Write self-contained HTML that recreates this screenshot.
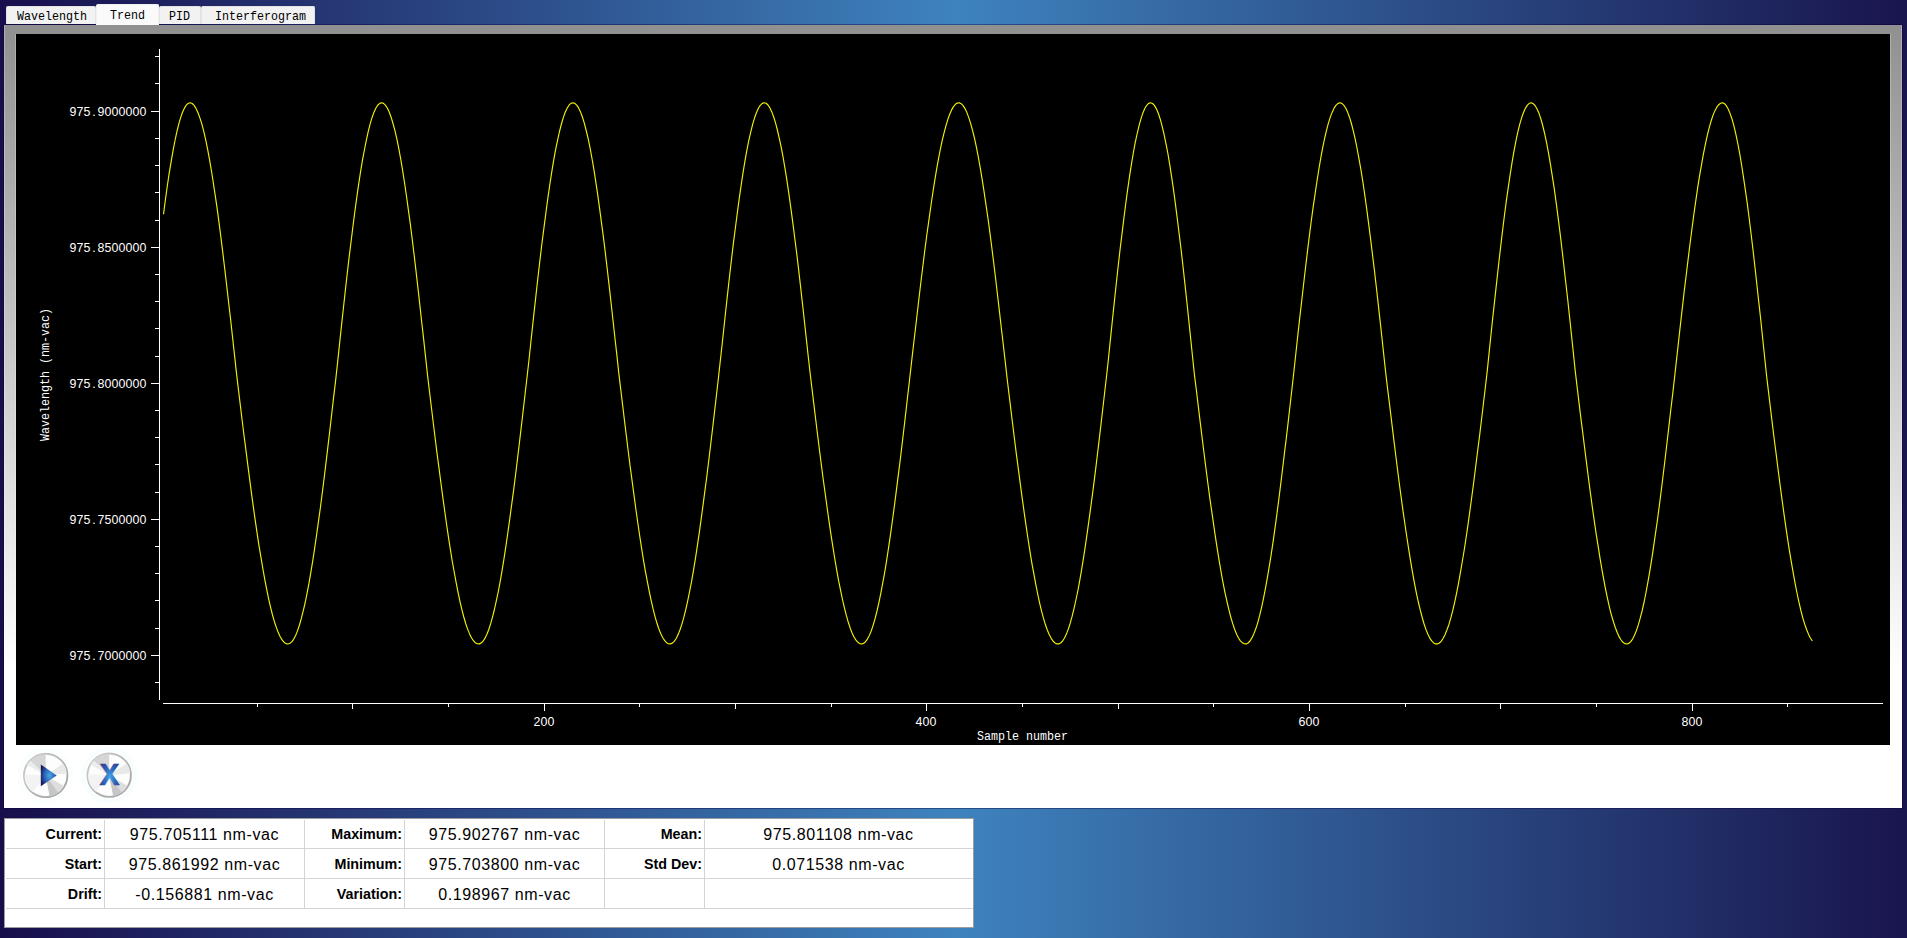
<!DOCTYPE html>
<html>
<head>
<meta charset="utf-8">
<title>Wavelength Trend</title>
<style>
html,body{margin:0;padding:0;}
body{width:1907px;height:938px;overflow:hidden;position:relative;
  background:linear-gradient(to right,#180e4c 0px,#3e83be 955px,#19154e 1907px);
  font-family:"Liberation Sans",sans-serif;}
.abs{position:absolute;box-sizing:border-box;}
/* tabs */
.tab{position:absolute;z-index:2;box-sizing:border-box;top:6px;height:18px;background:#f2f2f2;
  border:1px solid #e3e3e3;border-bottom:none;border-radius:2px 2px 0 0;
  font-family:"Liberation Mono",monospace;font-size:13.5px;line-height:18px;color:#000;white-space:nowrap;overflow:visible;}
.tab span{position:absolute;top:0px;left:0;display:block;transform-origin:0 0;transform:scaleX(0.864);}
.tab.sel{top:4px;height:21px;background:#fafafa;border-color:#f0f0f0;}
/* main panel */
#panel{left:4px;top:25px;width:1898px;height:783px;box-shadow:0 0 0 1px rgba(8,0,60,0.4);background:linear-gradient(to bottom,#909090 0px,#ffffff 645px);}
#plot{left:16px;top:34px;width:1874px;height:711px;background:#000;}
.hl{background:rgba(255,255,255,0.25);width:1px;top:25px;height:720px;}
svg text{font-family:"Liberation Mono",monospace;fill:#fff;}
svg text.dg{font-family:"Liberation Sans",sans-serif;font-size:12.4px;}
svg text.lt{font-family:"Liberation Mono",monospace;font-size:13.5px;}
/* table */
#tbl{left:4px;top:818px;width:970px;height:110px;background:#fff;border:1px solid #9a9c9e;}
.gl{position:absolute;background:#d4d4d4;}
.lbl{position:absolute;font-weight:bold;font-size:14.3px;line-height:16px;text-align:right;color:#000;white-space:nowrap;}
.val{position:absolute;font-size:16px;letter-spacing:0.6px;line-height:20px;text-align:center;color:#000;white-space:nowrap;}
</style>
</head>
<body>

<!-- tabs -->
<div class="tab" style="left:6px;width:90px;"><span style="left:9.6px;top:1px;">Wavelength</span></div>
<div class="tab sel" style="left:96px;width:63px;"><span style="left:13.4px;top:2px;">Trend</span></div>
<div class="tab" style="left:159px;width:42px;"><span style="left:8.6px;top:1px;">PID</span></div>
<div class="tab" style="left:201px;width:114px;"><span style="left:12.7px;top:1px;">Interferogram</span></div>

<!-- main panel -->
<div id="panel" class="abs"></div>
<div class="abs hl" style="left:4px;"></div>
<div class="abs hl" style="left:15px;top:34px;height:711px;"></div>
<div class="abs hl" style="left:1890px;top:34px;height:711px;"></div>
<div class="abs hl" style="left:1901px;"></div>

<div id="plot" class="abs">
<svg width="1874" height="711" viewBox="0 0 1874 711">
<g stroke="#fff" stroke-width="1" shape-rendering="crispEdges">
<line x1="143.5" y1="15" x2="143.5" y2="666"/>
<line x1="139" y1="22.5" x2="144" y2="22.5"/>
<line x1="139" y1="49.5" x2="144" y2="49.5"/>
<line x1="135" y1="77.5" x2="144" y2="77.5"/>
<line x1="139" y1="104.5" x2="144" y2="104.5"/>
<line x1="139" y1="131.5" x2="144" y2="131.5"/>
<line x1="139" y1="158.5" x2="144" y2="158.5"/>
<line x1="139" y1="186.5" x2="144" y2="186.5"/>
<line x1="135" y1="213.5" x2="144" y2="213.5"/>
<line x1="139" y1="240.5" x2="144" y2="240.5"/>
<line x1="139" y1="267.5" x2="144" y2="267.5"/>
<line x1="139" y1="294.5" x2="144" y2="294.5"/>
<line x1="139" y1="322.5" x2="144" y2="322.5"/>
<line x1="135" y1="349.5" x2="144" y2="349.5"/>
<line x1="139" y1="376.5" x2="144" y2="376.5"/>
<line x1="139" y1="403.5" x2="144" y2="403.5"/>
<line x1="139" y1="430.5" x2="144" y2="430.5"/>
<line x1="139" y1="458.5" x2="144" y2="458.5"/>
<line x1="135" y1="485.5" x2="144" y2="485.5"/>
<line x1="139" y1="512.5" x2="144" y2="512.5"/>
<line x1="139" y1="539.5" x2="144" y2="539.5"/>
<line x1="139" y1="566.5" x2="144" y2="566.5"/>
<line x1="139" y1="594.5" x2="144" y2="594.5"/>
<line x1="135" y1="621.5" x2="144" y2="621.5"/>
<line x1="139" y1="648.5" x2="144" y2="648.5"/>
<line x1="147" y1="669.5" x2="1867" y2="669.5"/>
<line x1="241.5" y1="669" x2="241.5" y2="673"/>
<line x1="336.5" y1="669" x2="336.5" y2="675"/>
<line x1="432.5" y1="669" x2="432.5" y2="673"/>
<line x1="528.5" y1="669" x2="528.5" y2="677"/>
<line x1="623.5" y1="669" x2="623.5" y2="673"/>
<line x1="719.5" y1="669" x2="719.5" y2="675"/>
<line x1="815.5" y1="669" x2="815.5" y2="673"/>
<line x1="910.5" y1="669" x2="910.5" y2="677"/>
<line x1="1006.5" y1="669" x2="1006.5" y2="673"/>
<line x1="1102.5" y1="669" x2="1102.5" y2="675"/>
<line x1="1197.5" y1="669" x2="1197.5" y2="673"/>
<line x1="1293.5" y1="669" x2="1293.5" y2="677"/>
<line x1="1389.5" y1="669" x2="1389.5" y2="673"/>
<line x1="1484.5" y1="669" x2="1484.5" y2="675"/>
<line x1="1580.5" y1="669" x2="1580.5" y2="673"/>
<line x1="1676.5" y1="669" x2="1676.5" y2="677"/>
<line x1="1771.5" y1="669" x2="1771.5" y2="673"/>
</g>
<polyline fill="none" stroke="#f2f200" stroke-width="1.15" stroke-linejoin="round" points="147.5,180.2 149.4,165.7 151.3,152.0 153.2,139.2 155.2,127.3 157.1,116.4 159.0,106.5 160.9,97.6 162.8,89.9 164.7,83.4 166.6,78.0 168.5,73.9 170.5,70.9 172.4,69.3 174.3,68.8 176.2,69.5 178.1,71.4 180.0,74.4 181.9,78.5 183.8,83.6 185.8,89.9 187.7,97.1 189.6,105.4 191.5,114.7 193.4,124.9 195.3,136.0 197.2,148.0 199.1,160.7 201.1,174.2 203.0,188.4 204.9,203.2 206.8,218.6 208.7,234.5 210.6,250.8 212.5,267.5 214.5,284.5 216.4,301.7 218.3,319.1 220.2,336.6 222.1,352.7 224.0,368.5 225.9,384.2 227.8,399.7 229.8,415.1 231.7,430.1 233.6,444.9 235.5,459.3 237.4,473.3 239.3,486.8 241.2,499.9 243.1,512.3 245.1,524.2 247.0,535.5 248.9,546.1 250.8,555.9 252.7,565.1 254.6,573.4 256.5,581.0 258.4,587.7 260.4,593.6 262.3,598.6 264.2,602.7 266.1,605.9 268.0,608.2 269.9,609.6 271.8,610.0 273.7,609.5 275.7,607.9 277.6,605.3 279.5,601.7 281.4,597.1 283.3,591.5 285.2,584.9 287.1,577.4 289.1,569.0 291.0,559.7 292.9,549.6 294.8,538.7 296.7,527.0 298.6,514.6 300.5,501.5 302.4,487.8 304.4,473.5 306.3,458.7 308.2,443.5 310.1,427.9 312.0,411.9 313.9,395.7 315.8,379.2 317.7,362.6 319.7,345.9 321.6,328.4 323.5,310.4 325.4,292.6 327.3,275.0 329.2,257.7 331.1,240.8 333.0,224.2 335.0,208.2 336.9,192.8 338.8,178.0 340.7,163.9 342.6,150.6 344.5,138.2 346.4,126.6 348.4,116.0 350.3,106.3 352.2,97.7 354.1,90.2 356.0,83.7 357.9,78.4 359.8,74.2 361.7,71.2 363.7,69.4 365.6,68.8 367.5,69.4 369.4,71.1 371.3,74.0 373.2,78.0 375.1,83.2 377.0,89.5 379.0,96.8 380.9,105.2 382.8,114.6 384.7,125.0 386.6,136.3 388.5,148.5 390.4,161.5 392.3,175.3 394.3,189.8 396.2,205.0 398.1,220.7 400.0,236.9 401.9,253.6 403.8,270.6 405.7,288.0 407.7,305.6 409.6,323.3 411.5,340.9 413.4,356.7 415.3,372.5 417.2,388.2 419.1,403.8 421.0,419.1 423.0,434.1 424.9,448.8 426.8,463.1 428.7,477.0 430.6,490.5 432.5,503.4 434.4,515.7 436.3,527.5 438.3,538.5 440.2,548.9 442.1,558.6 444.0,567.6 445.9,575.7 447.8,583.0 449.7,589.5 451.6,595.1 453.6,599.9 455.5,603.7 457.4,606.7 459.3,608.7 461.2,609.8 463.1,609.9 465.0,609.1 467.0,607.3 468.9,604.4 470.8,600.5 472.7,595.7 474.6,589.9 476.5,583.1 478.4,575.5 480.3,566.9 482.3,557.5 484.2,547.3 486.1,536.3 488.0,524.6 489.9,512.1 491.8,499.0 493.7,485.3 495.6,471.1 497.6,456.4 499.5,441.2 501.4,425.6 503.3,409.8 505.2,393.6 507.1,377.3 509.0,360.8 510.9,344.2 512.9,326.7 514.8,308.8 516.7,291.1 518.6,273.6 520.5,256.4 522.4,239.5 524.3,223.1 526.2,207.2 528.2,191.9 530.1,177.2 532.0,163.2 533.9,150.0 535.8,137.7 537.7,126.2 539.6,115.6 541.6,106.1 543.5,97.5 545.4,90.0 547.3,83.6 549.2,78.3 551.1,74.2 553.0,71.2 554.9,69.4 556.9,68.8 558.8,69.4 560.7,71.1 562.6,73.9 564.5,77.9 566.4,83.0 568.3,89.2 570.2,96.5 572.2,104.9 574.1,114.2 576.0,124.5 577.9,135.7 579.8,147.8 581.7,160.7 583.6,174.4 585.5,188.8 587.5,203.8 589.4,219.4 591.3,235.5 593.2,252.1 595.1,269.0 597.0,286.3 598.9,303.7 600.9,321.4 602.8,339.1 604.7,355.0 606.6,370.9 608.5,386.7 610.4,402.3 612.3,417.7 614.2,432.8 616.2,447.6 618.1,462.0 620.0,476.0 621.9,489.5 623.8,502.5 625.7,514.9 627.6,526.8 629.5,537.9 631.5,548.4 633.4,558.2 635.3,567.2 637.2,575.4 639.1,582.8 641.0,589.3 642.9,595.0 644.8,599.8 646.8,603.7 648.7,606.6 650.6,608.7 652.5,609.8 654.4,609.9 656.3,609.1 658.2,607.3 660.2,604.5 662.1,600.6 664.0,595.8 665.9,590.1 667.8,583.4 669.7,575.8 671.6,567.3 673.5,558.0 675.5,547.9 677.4,536.9 679.3,525.3 681.2,512.9 683.1,499.9 685.0,486.4 686.9,472.2 688.8,457.6 690.8,442.5 692.7,427.0 694.6,411.2 696.5,395.2 698.4,378.9 700.3,362.5 702.2,346.0 704.1,328.6 706.1,310.7 708.0,292.9 709.9,275.3 711.8,257.9 713.7,241.0 715.6,224.5 717.5,208.4 719.5,193.0 721.4,178.2 723.3,164.1 725.2,150.8 727.1,138.3 729.0,126.7 730.9,116.1 732.8,106.4 734.8,97.8 736.7,90.2 738.6,83.8 740.5,78.5 742.4,74.3 744.3,71.3 746.2,69.4 748.1,68.8 750.1,69.3 752.0,71.0 753.9,73.9 755.8,77.9 757.7,83.0 759.6,89.2 761.5,96.5 763.4,104.8 765.4,114.1 767.3,124.4 769.2,135.6 771.1,147.7 773.0,160.6 774.9,174.3 776.8,188.7 778.7,203.7 780.7,219.3 782.6,235.4 784.5,252.0 786.4,268.9 788.3,286.2 790.2,303.6 792.1,321.3 794.1,339.0 796.0,354.8 797.9,370.6 799.8,386.2 801.7,401.7 803.6,417.0 805.5,432.0 807.4,446.7 809.4,461.0 811.3,475.0 813.2,488.4 815.1,501.3 817.0,513.7 818.9,525.5 820.8,536.7 822.7,547.2 824.7,556.9 826.6,566.0 828.5,574.2 830.4,581.7 832.3,588.3 834.2,594.1 836.1,599.0 838.0,603.0 840.0,606.1 841.9,608.3 843.8,609.6 845.7,610.0 847.6,609.4 849.5,607.7 851.4,605.1 853.4,601.4 855.3,596.7 857.2,591.1 859.1,584.5 861.0,577.0 862.9,568.6 864.8,559.3 866.7,549.2 868.7,538.3 870.6,526.6 872.5,514.2 874.4,501.2 876.3,487.5 878.2,473.3 880.1,458.6 882.0,443.4 884.0,427.8 885.9,411.9 887.8,395.7 889.7,379.4 891.6,362.8 893.5,346.2 895.4,329.4 897.3,312.7 899.3,296.0 901.2,279.5 903.1,263.3 905.0,247.3 906.9,231.7 908.8,216.5 910.7,201.8 912.7,187.6 914.6,174.0 916.5,161.0 918.4,148.7 920.3,137.2 922.2,126.4 924.1,116.5 926.0,107.4 928.0,99.2 929.9,91.9 931.8,85.6 933.7,80.3 935.6,75.9 937.5,72.6 939.4,70.3 941.3,69.1 943.3,68.8 945.2,69.7 947.1,71.6 949.0,74.6 950.9,78.6 952.8,83.6 954.7,89.7 956.6,96.7 958.6,104.7 960.5,113.7 962.4,123.5 964.3,134.1 966.2,145.6 968.1,157.9 970.0,170.8 972.0,184.5 973.9,198.7 975.8,213.5 977.7,228.8 979.6,244.5 981.5,260.7 983.4,277.1 985.3,293.7 987.3,310.6 989.2,327.5 991.1,344.2 993.0,360.0 994.9,375.7 996.8,391.3 998.7,406.7 1000.6,421.9 1002.6,436.9 1004.5,451.4 1006.4,465.6 1008.3,479.4 1010.2,492.7 1012.1,505.5 1014.0,517.7 1015.9,529.3 1017.9,540.2 1019.8,550.4 1021.7,560.0 1023.6,568.8 1025.5,576.8 1027.4,583.9 1029.3,590.3 1031.2,595.8 1033.2,600.4 1035.1,604.1 1037.0,607.0 1038.9,608.9 1040.8,609.9 1042.7,609.9 1044.6,609.0 1046.6,607.0 1048.5,604.0 1050.4,600.1 1052.3,595.1 1054.2,589.2 1056.1,582.4 1058.0,574.6 1059.9,566.0 1061.9,556.5 1063.8,546.2 1065.7,535.1 1067.6,523.3 1069.5,510.8 1071.4,497.6 1073.3,483.9 1075.2,469.6 1077.2,454.8 1079.1,439.6 1081.0,424.0 1082.9,408.1 1084.8,391.9 1086.7,375.5 1088.6,359.0 1090.5,342.5 1092.5,324.2 1094.4,305.6 1096.3,287.2 1098.2,269.1 1100.1,251.2 1102.0,233.8 1103.9,216.9 1105.9,200.6 1107.8,184.9 1109.7,170.0 1111.6,155.9 1113.5,142.6 1115.4,130.3 1117.3,119.0 1119.2,108.7 1121.2,99.5 1123.1,91.4 1125.0,84.6 1126.9,78.9 1128.8,74.5 1130.7,71.3 1132.6,69.4 1134.5,68.8 1136.5,69.5 1138.4,71.4 1140.3,74.6 1142.2,79.0 1144.1,84.7 1146.0,91.6 1147.9,99.6 1149.8,108.8 1151.8,119.0 1153.7,130.3 1155.6,142.6 1157.5,155.7 1159.4,169.8 1161.3,184.7 1163.2,200.2 1165.2,216.5 1167.1,233.3 1169.0,250.6 1170.9,268.3 1172.8,286.4 1174.7,304.7 1176.6,323.2 1178.5,341.4 1180.5,357.3 1182.4,373.1 1184.3,388.9 1186.2,404.4 1188.1,419.7 1190.0,434.8 1191.9,449.5 1193.8,463.8 1195.8,477.7 1197.7,491.2 1199.6,504.1 1201.5,516.4 1203.4,528.1 1205.3,539.2 1207.2,549.6 1209.1,559.2 1211.1,568.1 1213.0,576.2 1214.9,583.5 1216.8,589.9 1218.7,595.5 1220.6,600.2 1222.5,604.0 1224.4,606.9 1226.4,608.8 1228.3,609.8 1230.2,609.9 1232.1,609.0 1234.0,607.0 1235.9,603.9 1237.8,599.9 1239.8,594.8 1241.7,588.8 1243.6,581.7 1245.5,573.8 1247.4,564.9 1249.3,555.2 1251.2,544.6 1253.1,533.3 1255.1,521.1 1257.0,508.3 1258.9,494.9 1260.8,480.8 1262.7,466.2 1264.6,451.1 1266.5,435.5 1268.4,419.6 1270.4,403.4 1272.3,386.9 1274.2,370.3 1276.1,353.5 1278.0,336.5 1279.9,319.0 1281.8,301.5 1283.7,284.1 1285.7,267.0 1287.6,250.2 1289.5,233.8 1291.4,217.9 1293.3,202.4 1295.2,187.5 1297.1,173.3 1299.1,159.8 1301.0,147.0 1302.9,135.0 1304.8,123.9 1306.7,113.7 1308.6,104.5 1310.5,96.3 1312.4,89.1 1314.4,82.9 1316.3,77.9 1318.2,73.9 1320.1,71.1 1322.0,69.4 1323.9,68.8 1325.8,69.4 1327.7,71.1 1329.7,74.0 1331.6,78.1 1333.5,83.2 1335.4,89.5 1337.3,96.8 1339.2,105.2 1341.1,114.5 1343.0,124.8 1345.0,136.1 1346.9,148.2 1348.8,161.2 1350.7,174.9 1352.6,189.3 1354.5,204.3 1356.4,219.9 1358.4,236.1 1360.3,252.7 1362.2,269.6 1364.1,286.9 1366.0,304.3 1367.9,322.0 1369.8,339.6 1371.7,355.6 1373.7,371.6 1375.6,387.4 1377.5,403.1 1379.4,418.5 1381.3,433.7 1383.2,448.5 1385.1,462.9 1387.0,476.9 1389.0,490.5 1390.9,503.5 1392.8,515.9 1394.7,527.7 1396.6,538.9 1398.5,549.4 1400.4,559.1 1402.3,568.0 1404.3,576.2 1406.2,583.5 1408.1,590.0 1410.0,595.6 1411.9,600.3 1413.8,604.1 1415.7,606.9 1417.7,608.9 1419.6,609.9 1421.5,609.9 1423.4,609.0 1425.3,607.1 1427.2,604.3 1429.1,600.5 1431.0,595.8 1433.0,590.2 1434.9,583.7 1436.8,576.3 1438.7,568.1 1440.6,559.1 1442.5,549.3 1444.4,538.7 1446.3,527.5 1448.3,515.5 1450.2,503.0 1452.1,489.9 1454.0,476.2 1455.9,462.0 1457.8,447.5 1459.7,432.5 1461.6,417.2 1463.6,401.6 1465.5,385.8 1467.4,369.8 1469.3,353.7 1471.2,337.4 1473.1,318.9 1475.0,300.5 1476.9,282.4 1478.9,264.4 1480.8,246.9 1482.7,229.7 1484.6,213.1 1486.5,197.1 1488.4,181.7 1490.3,167.1 1492.3,153.2 1494.2,140.3 1496.1,128.2 1498.0,117.2 1499.9,107.2 1501.8,98.2 1503.7,90.4 1505.6,83.8 1507.6,78.3 1509.5,74.1 1511.4,71.1 1513.3,69.3 1515.2,68.8 1517.1,69.6 1519.0,71.5 1520.9,74.7 1522.9,79.1 1524.8,84.7 1526.7,91.5 1528.6,99.4 1530.5,108.4 1532.4,118.4 1534.3,129.4 1536.2,141.4 1538.2,154.3 1540.1,168.1 1542.0,182.6 1543.9,197.8 1545.8,213.7 1547.7,230.1 1549.6,247.1 1551.6,264.5 1553.5,282.2 1555.4,300.2 1557.3,318.3 1559.2,336.6 1561.1,352.8 1563.0,368.6 1564.9,384.4 1566.9,399.9 1568.8,415.3 1570.7,430.4 1572.6,445.2 1574.5,459.6 1576.4,473.6 1578.3,487.2 1580.2,500.2 1582.2,512.7 1584.1,524.6 1586.0,535.9 1587.9,546.4 1589.8,556.3 1591.7,565.4 1593.6,573.8 1595.5,581.3 1597.5,588.0 1599.4,593.8 1601.3,598.8 1603.2,602.9 1605.1,606.0 1607.0,608.3 1608.9,609.6 1610.9,610.0 1612.8,609.4 1614.7,607.7 1616.6,605.1 1618.5,601.3 1620.4,596.6 1622.3,590.9 1624.2,584.2 1626.2,576.5 1628.1,568.0 1630.0,558.5 1631.9,548.2 1633.8,537.1 1635.7,525.3 1637.6,512.7 1639.5,499.4 1641.5,485.5 1643.4,471.1 1645.3,456.2 1647.2,440.8 1649.1,425.0 1651.0,408.8 1652.9,392.4 1654.8,375.8 1656.8,359.1 1658.7,342.3 1660.6,325.1 1662.5,308.0 1664.4,290.9 1666.3,274.1 1668.2,257.5 1670.2,241.3 1672.1,225.4 1674.0,210.0 1675.9,195.2 1677.8,180.9 1679.7,167.3 1681.6,154.3 1683.5,142.2 1685.5,130.8 1687.4,120.2 1689.3,110.6 1691.2,101.9 1693.1,94.1 1695.0,87.3 1696.9,81.6 1698.8,76.9 1700.8,73.2 1702.7,70.7 1704.6,69.2 1706.5,68.8 1708.4,69.6 1710.3,71.7 1712.2,75.0 1714.1,79.6 1716.1,85.3 1718.0,92.2 1719.9,100.3 1721.8,109.5 1723.7,119.7 1725.6,131.0 1727.5,143.3 1729.4,156.4 1731.4,170.4 1733.3,185.2 1735.2,200.7 1737.1,216.8 1739.0,233.5 1740.9,250.7 1742.8,268.3 1744.8,286.3 1746.7,304.5 1748.6,322.8 1750.5,341.0 1752.4,356.9 1754.3,372.8 1756.2,388.6 1758.1,404.2 1760.1,419.6 1762.0,434.7 1763.9,449.5 1765.8,463.8 1767.7,477.8 1769.6,491.3 1771.5,504.2 1773.4,516.6 1775.4,528.3 1777.3,539.4 1779.2,549.8 1781.1,559.5 1783.0,568.4 1784.9,576.5 1786.8,583.8 1788.7,590.2 1790.7,595.7 1792.6,600.4 1794.5,604.2 1796.4,607.0"/>
<text class="dg" x="53.5 60.5 67.5 76.2 81.5 88.5 95.5 102.5 109.5 116.5 123.5" y="82">975.9000000</text>
<text class="dg" x="53.5 60.5 67.5 76.2 81.5 88.5 95.5 102.5 109.5 116.5 123.5" y="218">975.8500000</text>
<text class="dg" x="53.5 60.5 67.5 76.2 81.5 88.5 95.5 102.5 109.5 116.5 123.5" y="354">975.8000000</text>
<text class="dg" x="53.5 60.5 67.5 76.2 81.5 88.5 95.5 102.5 109.5 116.5 123.5" y="490">975.7500000</text>
<text class="dg" x="53.5 60.5 67.5 76.2 81.5 88.5 95.5 102.5 109.5 116.5 123.5" y="626">975.7000000</text>
<text class="dg" x="517.5 524.5 531.5" y="692">200</text>
<text class="dg" x="899.5 906.5 913.5" y="692">400</text>
<text class="dg" x="1282.5 1289.5 1296.5" y="692">600</text>
<text class="dg" x="1665.5 1672.5 1679.5" y="692">800</text>
<g transform="translate(1006.5,706) scale(0.864,1)"><text class="lt" x="0" y="0" text-anchor="middle">Sample number</text></g>
<g transform="translate(33.4,340.5) rotate(-90) scale(0.864,1)"><text class="lt" x="0" y="0" text-anchor="middle">Wavelength (nm-vac)</text></g>
</svg>
</div>

<!-- buttons -->
<svg class="abs" style="left:16px;top:745px;" width="140" height="62" viewBox="0 0 140 62">
<defs>
<radialGradient id="gb" cx="0.55" cy="0.5" r="0.6"><stop offset="0" stop-color="#45a8e6"/><stop offset="0.55" stop-color="#2e62b8"/><stop offset="1" stop-color="#181a55"/></radialGradient>
<radialGradient id="gx" cx="0.5" cy="0.5" r="0.55"><stop offset="0" stop-color="#3fa6e6"/><stop offset="0.6" stop-color="#2f5cb4"/><stop offset="1" stop-color="#2a3d8f"/></radialGradient>
<linearGradient id="ring" x1="0" y1="0" x2="1" y2="1"><stop offset="0" stop-color="#d0d0d0"/><stop offset="1" stop-color="#9e9e9e"/></linearGradient>
<g id="disc">
<circle cx="0" cy="0" r="21.7" fill="#fdfdfd" stroke="url(#ring)" stroke-width="1.9"/>
<path d="M0,0 L-15.5,-14.5 A21.2,21.2 0 0 1 0,-21.2 Z" fill="#d6d6d6"/>
<path d="M0,0 L-18.5,-10.4 A21.2,21.2 0 0 1 -15.5,-14.5 Z" fill="#ececec"/>
<path d="M0,0 L17.5,-12 A21.2,21.2 0 0 1 21.2,-2 Z" fill="#e9e9e9"/>
<path d="M0,0 L18.4,10.6 A21.2,21.2 0 0 1 4,20.8 Z" fill="#dedede"/>
<path d="M0,0 L12.5,17.1 A21.2,21.2 0 0 1 4,20.8 Z" fill="#c6c6c6"/>
<path d="M0,0 L-21.2,-1 A21.2,21.2 0 0 0 -13,16.7 Z" fill="#f3f3f3"/>
</g>
</defs>
<circle cx="29.7" cy="30.4" r="26" fill="none" stroke="#c8f4ff" stroke-opacity="0.08" stroke-width="4"/>
<circle cx="93.2" cy="30.2" r="26" fill="none" stroke="#c8f4ff" stroke-opacity="0.12" stroke-width="4"/>
<use href="#disc" x="29.7" y="30.4"/>
<path d="M24.8,19.5 L24.8,41.3 L40.7,30.5 Z" fill="url(#gb)"/>
<use href="#disc" x="93.2" y="30.2"/>
<g transform="translate(93.4,40.1) scale(1.05,1)"><text x="0" y="0" text-anchor="middle" font-family="Liberation Sans, sans-serif" font-weight="bold" font-size="31" style="fill:url(#gx);stroke:url(#gx);stroke-width:0.5">X</text></g>
</svg>

<!-- table -->
<div id="tbl" class="abs">
<div class="gl" style="left:1px;top:29px;width:967px;height:1px;"></div>
<div class="gl" style="left:1px;top:59px;width:967px;height:1px;"></div>
<div class="gl" style="left:1px;top:89px;width:967px;height:1px;"></div>
<div class="gl" style="left:99px;top:1px;width:1px;height:88px;"></div>
<div class="gl" style="left:299px;top:1px;width:1px;height:88px;"></div>
<div class="gl" style="left:399px;top:1px;width:1px;height:88px;"></div>
<div class="gl" style="left:599px;top:1px;width:1px;height:88px;"></div>
<div class="gl" style="left:699px;top:1px;width:1px;height:88px;"></div>

<div class="lbl" style="left:0;width:97px;top:7px;">Current:</div>
<div class="lbl" style="left:0;width:97px;top:37px;">Start:</div>
<div class="lbl" style="left:0;width:97px;top:67px;">Drift:</div>
<div class="val" style="left:100px;width:199px;top:6px;">975.705111 nm-vac</div>
<div class="val" style="left:100px;width:199px;top:36px;">975.861992 nm-vac</div>
<div class="val" style="left:100px;width:199px;top:66px;">-0.156881 nm-vac</div>

<div class="lbl" style="left:300px;width:97px;top:7px;">Maximum:</div>
<div class="lbl" style="left:300px;width:97px;top:37px;">Minimum:</div>
<div class="lbl" style="left:300px;width:97px;top:67px;">Variation:</div>
<div class="val" style="left:400px;width:199px;top:6px;">975.902767 nm-vac</div>
<div class="val" style="left:400px;width:199px;top:36px;">975.703800 nm-vac</div>
<div class="val" style="left:400px;width:199px;top:66px;">0.198967 nm-vac</div>

<div class="lbl" style="left:600px;width:97px;top:7px;">Mean:</div>
<div class="lbl" style="left:600px;width:97px;top:37px;">Std Dev:</div>
<div class="val" style="left:700px;width:267px;top:6px;">975.801108 nm-vac</div>
<div class="val" style="left:700px;width:267px;top:36px;">0.071538 nm-vac</div>
</div>

</body>
</html>
